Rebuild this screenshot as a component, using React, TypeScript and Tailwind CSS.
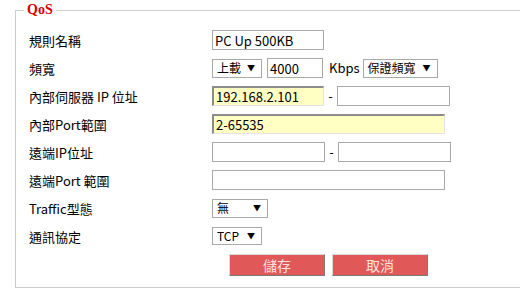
import React from "react";

const font = { fontFamily: '"Noto Sans CJK TC", "Liberation Sans", sans-serif' };

function TextBox({ value = "", width, yellow = false }: { value?: string; width: string; yellow?: boolean }) {
  return (
    <div
      className={`${width} h-[20px] flex items-center px-[2px] text-[13px] text-black leading-none ${
        yellow
          ? "bg-[#ffffc4] border-t-2 border-l-2 border-r border-b border-t-[#8c8c8c] border-l-[#8c8c8c] border-r-[#e3e3e3] border-b-[#e3e3e3]"
          : "bg-white border border-[#a9a9a9]"
      }`}
    >
      {value}
    </div>
  );
}

function Select({ label, width, h = "h-[19px]" }: { label: string; width: string; h?: string }) {
  return (
    <div className={`${width} ${h} flex items-center justify-between bg-white border border-[#a9a9a9] pl-[4px] pr-[6px] text-[12px] text-black leading-none`}>
      <span>{label}</span>
      <span className="text-[8px]">▼</span>
    </div>
  );
}

function Row({ label, children }: { label: React.ReactNode; children: React.ReactNode }) {
  return (
    <div className="flex items-center h-[28px]">
      <div className="w-[183px] text-[13px] text-black leading-none">{label}</div>
      <div className="flex items-center">{children}</div>
    </div>
  );
}

function Dash() {
  return <span className="w-[13px] text-center text-[13px] text-black">-</span>;
}

export default function App() {
  return (
    <div className="w-[520px] h-[302px] overflow-hidden bg-white" style={font}>
      <fieldset className="ml-[15px] w-[530px] border border-[#cccccc] pl-[13px] pt-[6px] pb-[11px]">
        <legend
          className="-ml-[5px] px-[3px] h-[20px] leading-[20px] text-[14px] font-bold text-[#d40000]"
          style={{ fontFamily: '"Liberation Serif", serif' }}
        >
          QoS
        </legend>

        <Row label="規則名稱">
          <TextBox value="PC Up 500KB" width="w-[112px]" />
        </Row>
        <Row label="頻寬">
          <Select label="上載" width="w-[50px]" />
          <div className="ml-[5px]">
            <TextBox value="4000" width="w-[56px]" />
          </div>
          <span className="ml-[6px] mr-[3px] text-[13px] text-black">Kbps</span>
          <Select label="保證頻寬" width="w-[75px]" />
        </Row>
        <Row label="內部伺服器 IP 位址">
          <TextBox value="192.168.2.101" width="w-[112px]" yellow />
          <Dash />
          <TextBox width="w-[113px]" />
        </Row>
        <Row label="內部Port範圍">
          <TextBox value="2-65535" width="w-[233px]" yellow />
        </Row>
        <Row label="遠端IP位址">
          <TextBox width="w-[113px]" />
          <Dash />
          <TextBox width="w-[113px]" />
        </Row>
        <Row label="遠端Port 範圍">
          <TextBox width="w-[233px]" />
        </Row>
        <Row label="Traffic型態">
          <Select label="無" width="w-[56px]" />
        </Row>
        <Row label="通訊協定">
          <Select label="TCP" width="w-[50px]" h="h-[18px]" />
        </Row>

        <div className="flex gap-[7px] pl-[200px] mt-[4px]">
          <button className="w-[96px] h-[22px] bg-[#e05858] border border-t-[#dcdcdc] border-l-[#dcdcdc] border-r-[#7a7a7a] border-b-[#7a7a7a] text-[14px] text-[#ffe0e0] leading-none">
            儲存
          </button>
          <button className="w-[96px] h-[22px] bg-[#e05858] border border-t-[#dcdcdc] border-l-[#dcdcdc] border-r-[#7a7a7a] border-b-[#7a7a7a] text-[14px] text-[#ffe0e0] leading-none">
            取消
          </button>
        </div>
      </fieldset>
    </div>
  );
}
